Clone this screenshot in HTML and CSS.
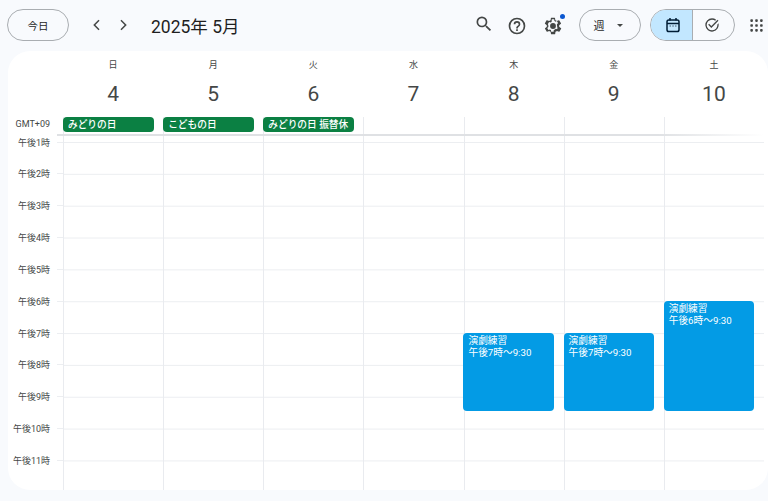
FILE: index.html
```html
<!DOCTYPE html>
<html lang="ja">
<head>
<meta charset="utf-8">
<title>カレンダー</title>
<link rel="stylesheet" href="styles.css">
</head>
<body>
<div class="app">
  <header class="topbar">
    <button class="pill today">今日</button>
    <div class="nav">
      <svg class="nav-icon" viewBox="0 0 24 24"><path d="M15.4 6.4 14 5l-7 7 7 7 1.4-1.4L9.8 12z"/></svg>
      <svg class="nav-icon" viewBox="0 0 24 24"><path d="M8.6 17.6 10 19l7-7-7-7-1.4 1.4 5.6 5.6z"/></svg>
    </div>
    <h1 class="title">2025年 5月</h1>
    <div class="actions">
      <svg class="tool search" viewBox="0 0 24 24"><path d="M15.500 14h-.79l-.28-.27A6.470 6.470 0 0 0 16 9.500 6.500 6.500 0 1 0 9.500 16c1.610 0 3.090-.59 4.230-1.570l.27.28v.79l5 4.990L20.490 19l-4.990-5zm-6 0C7.010 14 5 11.990 5 9.500S7.010 5 9.500 5 14 7.010 14 9.500 11.990 14 9.500 14z"/></svg>
      <svg class="tool help" viewBox="0 0 24 24"><path d="M11 18h2v-2h-2zm1-16a10 10 0 1 0 0 20 10 10 0 0 0 0-20zm0 18a8 8 0 1 1 0-16 8 8 0 0 1 0 16zm0-14a4 4 0 0 0-4 4h2a2 2 0 1 1 4 0c0 2-3 1.800-3 5h2c0-2.200 3-2.500 3-5a4 4 0 0 0-4-4z"/></svg>
      <span class="settings">
        <svg class="tool" viewBox="0 0 24 24"><path d="M19.400 13a7.600 7.600 0 0 0 0-2l2.100-1.600a.5.5 0 0 0 .1-.6l-2-3.500a.5.5 0 0 0-.6-.2l-2.500 1a7.300 7.300 0 0 0-1.700-1l-.4-2.600A.5.5 0 0 0 14 2h-4a.5.5 0 0 0-.5.4l-.4 2.600a7.700 7.700 0 0 0-1.700 1l-2.500-1a.5.5 0 0 0-.6.2l-2 3.500a.5.5 0 0 0 .1.6L4.600 11a7.900 7.900 0 0 0 0 2l-2.100 1.600a.5.5 0 0 0-.1.6l2 3.500c.1.200.4.300.6.200l2.500-1c.5.400 1.100.700 1.700 1l.4 2.600c0 .3.200.5.500.5h4c.2 0 .5-.2.500-.4l.4-2.700a7.700 7.700 0 0 0 1.700-1l2.500 1c.2.100.5 0 .6-.2l2-3.500a.5.5 0 0 0-.1-.6zm-2 1.700-.5 1.300-1.600-.6-1 .8a5.500 5.500 0 0 1-1.300.7l-.3 1.900-1.400.2h-1.500l-.3-2.100a5.500 5.500 0 0 1-1.300-.7l-1.700.7-1.400-2.500 1.400-1.100a5.600 5.600 0 0 1 0-1.600L5.900 9.700l1.400-2.500 1.700.7a5.500 5.500 0 0 1 1.300-.7L10.600 4h2.800l.3 2.100c.5.200.9.400 1.300.7l1.700-.7 1.400 2.500-1.400 1.100a5.600 5.600 0 0 1 0 1.600zM12 8.500a3.500 3.500 0 1 0 0 7 3.500 3.500 0 0 0 0-7z"/></svg>
        <i class="dot"></i>
      </span>
    </div>
    <button class="pill view">週<i class="caret"></i></button>
    <div class="segment">
      <span class="seg seg-on">
        <svg class="seg-icon cal" viewBox="0 0 16 16"><rect class="cal-frame" x="2" y="3" width="12" height="11.500" rx="1.800"/><path class="cal-frame" d="M2 6.500h12M5 1v2.500M11 1v2.500"/><path class="cal-dots" d="M4.500 9h1.500M7.300 9h1.500M10 9h1.500"/></svg>
      </span>
      <span class="seg seg-off">
        <svg class="seg-icon" viewBox="0 0 24 24"><path d="M12 2a10 10 0 1 0 9.700 7.500l-1.700 1.700A8 8 0 1 1 12 4c1.800 0 3.400.6 4.800 1.600l1.400-1.400A10 10 0 0 0 12 2zm8.300 2.300L11 13.600l-3.300-3.300-1.400 1.400L11 16.400 21.700 5.700z"/></svg>
      </span>
    </div>
    <svg class="apps" viewBox="0 0 16 16"><rect x=".4" y=".4" width="3.200" height="3.200" rx="1"/><rect x="6.400" y=".4" width="3.200" height="3.200" rx="1"/><rect x="12.400" y=".4" width="3.200" height="3.200" rx="1"/><rect x=".4" y="6.400" width="3.200" height="3.200" rx="1"/><rect x="6.400" y="6.400" width="3.200" height="3.200" rx="1"/><rect x="12.400" y="6.400" width="3.200" height="3.200" rx="1"/><rect x=".4" y="12.400" width="3.200" height="3.200" rx="1"/><rect x="6.400" y="12.400" width="3.200" height="3.200" rx="1"/><rect x="12.400" y="12.400" width="3.200" height="3.200" rx="1"/></svg>
  </header>

  <main class="card">
    <div class="days grid-cols">
      <div></div>
      <div class="day"><span class="dow">日</span><span class="num">4</span></div>
      <div class="day"><span class="dow">月</span><span class="num">5</span></div>
      <div class="day"><span class="dow">火</span><span class="num">6</span></div>
      <div class="day"><span class="dow">水</span><span class="num">7</span></div>
      <div class="day"><span class="dow">木</span><span class="num">8</span></div>
      <div class="day"><span class="dow">金</span><span class="num">9</span></div>
      <div class="day"><span class="dow">土</span><span class="num">10</span></div>
    </div>
    <div class="allday grid-cols">
      <div class="tz">GMT+09</div>
      <div class="allday-cell"><span class="chip">みどりの日</span></div>
      <div class="allday-cell"><span class="chip">こどもの日</span></div>
      <div class="allday-cell"><span class="chip">みどりの日 振替休</span></div>
      <div class="allday-cell"></div>
      <div class="allday-cell"></div>
      <div class="allday-cell"></div>
      <div class="allday-cell"></div>
    </div>
    <div class="divider"></div>
    <div class="body grid-cols">
      <div class="gutter">
        <div class="hour"><span class="hour-label">午後1時</span><i class="tick"></i></div>
        <div class="hour"><span class="hour-label">午後2時</span><i class="tick"></i></div>
        <div class="hour"><span class="hour-label">午後3時</span><i class="tick"></i></div>
        <div class="hour"><span class="hour-label">午後4時</span><i class="tick"></i></div>
        <div class="hour"><span class="hour-label">午後5時</span><i class="tick"></i></div>
        <div class="hour"><span class="hour-label">午後6時</span><i class="tick"></i></div>
        <div class="hour"><span class="hour-label">午後7時</span><i class="tick"></i></div>
        <div class="hour"><span class="hour-label">午後8時</span><i class="tick"></i></div>
        <div class="hour"><span class="hour-label">午後9時</span><i class="tick"></i></div>
        <div class="hour"><span class="hour-label">午後10時</span><i class="tick"></i></div>
        <div class="hour"><span class="hour-label">午後11時</span><i class="tick"></i></div>
      </div>
      <div class="col"></div>
      <div class="col"></div>
      <div class="col"></div>
      <div class="col"></div>
      <div class="col"><div class="event from7"><span>演劇練習</span><span>午後7時〜9:30</span></div></div>
      <div class="col"><div class="event from7"><span>演劇練習</span><span>午後7時〜9:30</span></div></div>
      <div class="col"><div class="event from6"><span>演劇練習</span><span>午後6時〜9:30</span></div></div>
    </div>
  </main>
</div>
</body>
</html>
```
FILE: styles.css
```css
* { box-sizing: border-box; }
html, body { margin: 0; height: 100%; }
body {
  background: #f8fafd;
  color: #1f1f1f;
  font-family: Roboto, "Noto Sans CJK JP", sans-serif;
  overflow: hidden;
}
.app { width: 768px; height: 501px; display: flex; flex-direction: column; }

/* top bar */
.topbar {
  height: 51px;
  flex: none;
  display: flex;
  align-items: center;
  padding: 0 2px 1px 7px;
}
.pill {
  height: 32px;
  border: 1px solid #a9adb1;
  border-radius: 16px;
  background: transparent;
  font-family: inherit;
  color: #1f1f1f;
  font-size: 10.500px;
  padding: 0;
  display: flex;
  align-items: center;
  justify-content: center;
}
.today { width: 62px; }
.nav { display: flex; gap: 8px; margin-left: 19px; }
.nav-icon { width: 18px; height: 18px; fill: #444746; }
.title {
  margin: 0 0 0 19px;
  font-size: 17.500px;
  font-weight: 400;
  color: #1f1f1f;
}
.actions {
  margin-left: auto;
  display: flex;
  align-items: center;
  gap: 13px;
}
.tool { display: block; width: 20px; height: 20px; fill: #444746; }
.search { margin-top: -2px; }
.help { margin-top: 1px; }
.settings { position: relative; display: block; margin-left: 3px; margin-top: 1px; }
.dot {
  position: absolute;
  right: -2px;
  top: -2px;
  width: 5px;
  height: 5px;
  border-radius: 50%;
  background: #0b57d0;
}
.view { width: 62px; margin-left: 16px; gap: 12px; padding-right: 4px; font-size: 11px; }
.caret {
  width: 0;
  height: 0;
  border-left: 3.500px solid transparent;
  border-right: 3.500px solid transparent;
  border-top: 3.500px solid #444746;
}
.segment {
  margin-left: 9px;
  width: 85px;
  height: 32px;
  display: flex;
  border: 1px solid #a9adb1;
  border-radius: 16px;
  overflow: hidden;
}
.seg { flex: 1; display: flex; align-items: center; justify-content: center; }
.seg-on { flex: none; width: 42px; background: #c2e7ff; border-right: 1px solid #a9adb1; padding-left: 2px; }
.seg-off { padding-right: 4px; }
.seg-icon { width: 16px; height: 16px; fill: #444746; }
.cal { fill: none; }
.cal-frame { fill: none; stroke: #001d35; stroke-width: 1.500; }
.cal-dots { fill: none; stroke: #3f5a70; stroke-width: 1; }
.apps { width: 13px; height: 13px; fill: #444746; margin-left: 15px; margin-right: 3px; }

/* calendar card */
.card {
  flex: none;
  height: 439px;
  margin-left: 8px;
  width: 760px;
  background: #fff;
  border-radius: 22px;
  padding-right: 4px;
  display: flex;
  flex-direction: column;
  overflow: hidden;
}
.grid-cols {
  display: grid;
  grid-template-columns: 55px repeat(7, minmax(0, 1fr));
}
.days { height: 66px; flex: none; }
.day { display: flex; flex-direction: column; align-items: center; }
.dow {
  margin-top: 8px;
  font-size: 9px;
  line-height: 12px;
  color: #444746;
}
.num {
  margin-top: 10px;
  font-size: 21px;
  line-height: 26px;
  color: #444746;
}
.allday { height: 16.500px; flex: none; }
.tz {
  font-size: 9px;
  line-height: 14px;
  color: #444746;
  text-align: right;
  padding-right: 13px;
  white-space: nowrap;
}
.allday-cell { border-left: 1px solid #e9ebef; min-width: 0; }
.chip {
  display: block;
  width: 91px;
  height: 15px;
  margin-left: -1px;
  padding-left: 5px;
  border-radius: 4px;
  background: #0b8043;
  color: #fff;
  font-size: 9.700px;
  font-weight: 500;
  line-height: 15px;
  white-space: nowrap;
}
.divider {
  flex: none;
  height: 2px;
  margin-left: 49px;
  background: linear-gradient(to right, #dfe1e4 85%, rgba(223, 225, 228, 0) 100%);
}
.body {
  flex: 1;
  min-height: 0;
}
.gutter { padding-top: 6px; }
.hour { height: 31.850px; display: flex; align-items: flex-start; justify-content: flex-end; }
.hour-label {
  font-size: 9px;
  line-height: 12px;
  margin-top: -5px;
  margin-right: 7px;
  color: #444746;
  white-space: nowrap;
}
.tick { width: 6px; height: 1px; background: #eceef1; flex: none; }
.col {
  position: relative;
  border-left: 1px solid #e9ebef;
  background-image: linear-gradient(#eceef1 1px, transparent 1px);
  background-size: 100% 31.850px;
  background-position: 0 6px;
}
.event {
  position: absolute;
  left: -1.100px;
  right: 9.600px;
  bottom: 81px;
  padding: 2px 5px 0;
  background: #039be5;
  border-radius: 4px;
  color: #fff;
  font-size: 9.700px;
  line-height: 12.500px;
  display: flex;
  flex-direction: column;
  white-space: nowrap;
}
.from7 { top: 197px; }
.from6 { top: 165px; }
```
